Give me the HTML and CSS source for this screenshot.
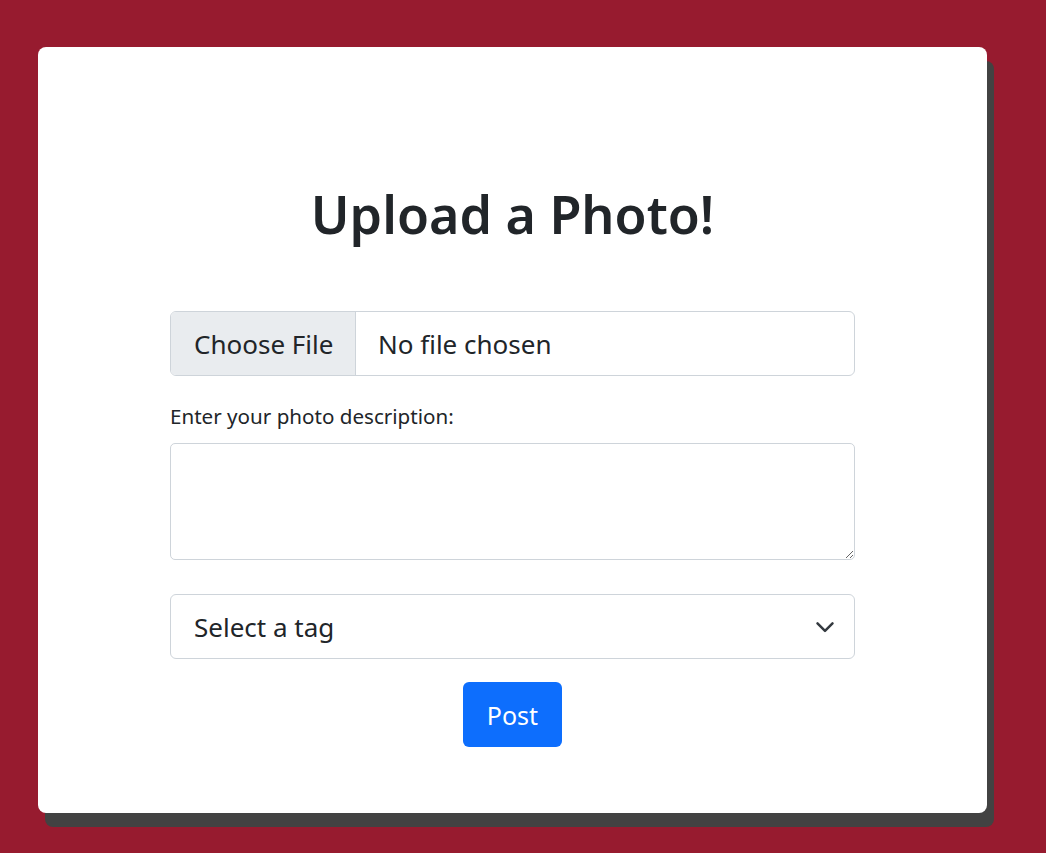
FILE: index.html
```html
<!DOCTYPE html>
<html lang="en">
<head>
<meta charset="utf-8">
<title>Upload a Photo</title>
<link rel="stylesheet" href="styles.css">
</head>
<body>
<main class="card">
  <h1 class="title">Upload a Photo!</h1>
  <form class="upload-form">
    <label class="file-field">
      <input type="file" class="file-native" name="photo">
      <span class="file-button">Choose File</span>
      <span class="file-name">No file chosen</span>
    </label>
    <label class="desc-label" for="desc">Enter your photo description:</label>
    <textarea id="desc" class="desc-input" rows="3"></textarea>
    <div class="select-wrap">
      <select class="tag-select">
        <option>Select a tag</option>
      </select>
      <svg class="chevron" viewBox="0 0 16 12" width="20" height="15" aria-hidden="true"><path d="M2 3.5l6 6 6-6" fill="none" stroke="#343a40" stroke-width="2" stroke-linecap="round" stroke-linejoin="round"/></svg>
    </div>
    <button type="submit" class="post-btn">Post</button>
  </form>
</main>
</body>
</html>
```
FILE: styles.css
```css
html, body {
  margin: 0;
  padding: 0;
}
body {
  background: #971b2f;
  min-height: 853px;
  font-family: "Noto Sans", "Liberation Sans", sans-serif;
  color: #212529;
  overflow: hidden;
}
.card {
  box-sizing: border-box;
  width: 949px;
  height: 766px;
  margin: 47px 0 0 38px;
  padding-top: 134px;
  background: #fff;
  border-radius: 8px;
  box-shadow: 7px 14px 0 #424242;
}
.title {
  margin: 0;
  text-align: center;
  font-size: 52px;
  line-height: 65px;
  font-weight: 600;
  color: #212529;
}
.upload-form {
  width: 685px;
  margin: 65px auto 0;
  display: flex;
  flex-direction: column;
}
.file-field {
  box-sizing: border-box;
  height: 65px;
  display: flex;
  align-items: stretch;
  border: 1px solid #ced4da;
  border-radius: 6px;
  overflow: hidden;
  font-size: 26px;
  cursor: pointer;
}
.file-native {
  display: none;
}
.file-button {
  box-sizing: border-box;
  width: 185px;
  flex: none;
  display: flex;
  align-items: center;
  padding-left: 23px;
  background: #e9ecef;
  border-right: 1px solid #ced4da;
}
.file-name {
  display: flex;
  align-items: center;
  padding-left: 22px;
}
.desc-label {
  margin-top: 24px;
  margin-bottom: 11px;
  font-size: 20.6px;
  line-height: 32px;
}
.desc-input {
  box-sizing: border-box;
  height: 117px;
  border: 1px solid #ced4da;
  border-radius: 5px;
  font-family: inherit;
  font-size: 20px;
  padding: 8px 16px;
  resize: vertical;
  margin: 0;
}
.select-wrap {
  position: relative;
  margin-top: 34px;
}
.tag-select {
  box-sizing: border-box;
  width: 100%;
  height: 65px;
  appearance: none;
  -webkit-appearance: none;
  background: #fff;
  border: 1px solid #ced4da;
  border-radius: 6px;
  padding: 0 60px 0 23px;
  font-family: inherit;
  font-size: 26px;
  color: #212529;
  margin: 0;
}
.chevron {
  position: absolute;
  right: 20px;
  top: 25px;
  pointer-events: none;
}
.post-btn {
  align-self: center;
  box-sizing: border-box;
  width: 99px;
  height: 65px;
  margin-top: 23px;
  border: none;
  border-radius: 6px;
  background: #0d6efd;
  color: #fff;
  font-family: inherit;
  font-size: 25px;
  padding: 0;
  cursor: pointer;
}
```
